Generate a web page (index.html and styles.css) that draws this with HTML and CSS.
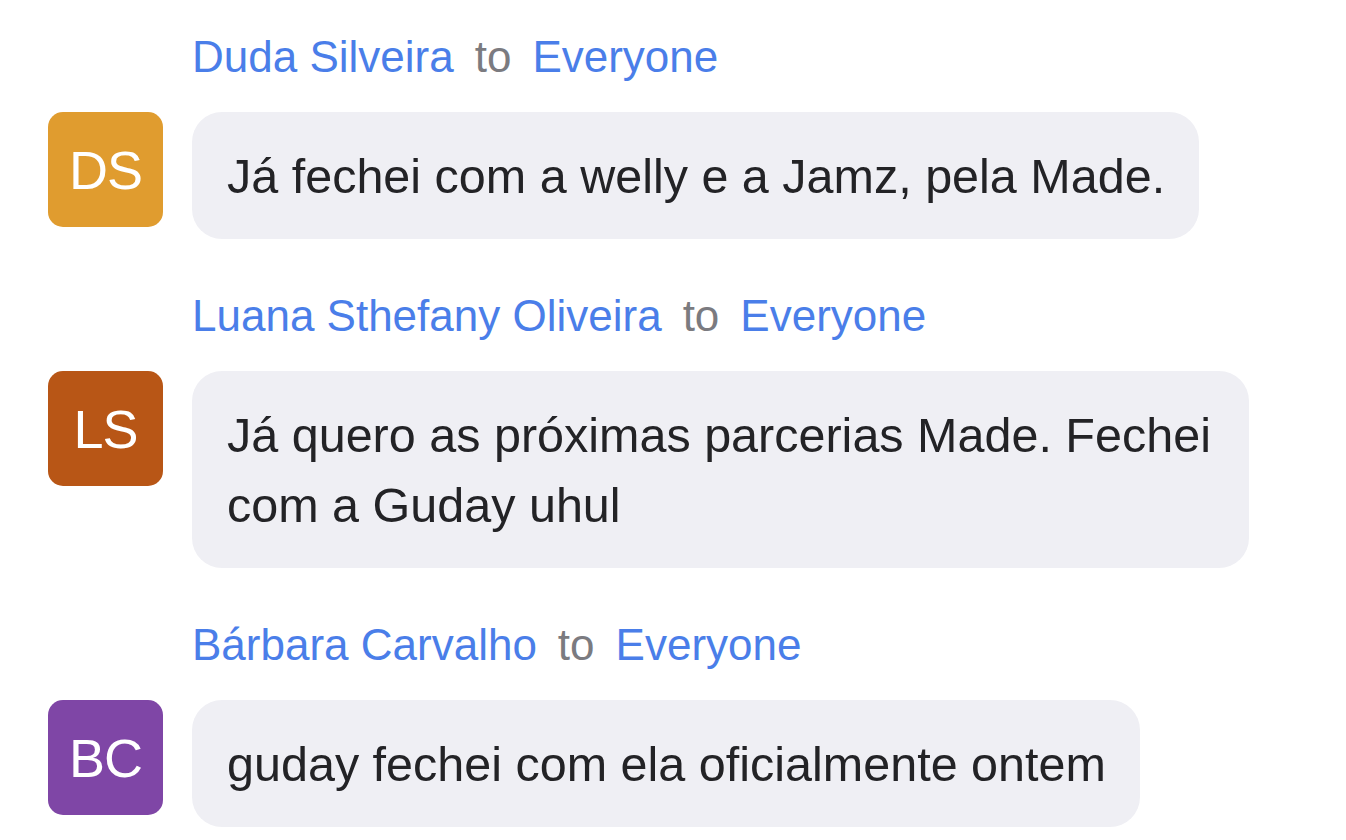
FILE: index.html
```html
<!DOCTYPE html>
<html lang="pt">
<head>
<meta charset="utf-8">
<title>Chat</title>
<link rel="stylesheet" href="styles.css">
</head>
<body>
<div class="chat">
  <div class="msg">
    <div class="meta"><span class="who">Duda Silveira</span><span class="to">to</span><span class="who">Everyone</span></div>
    <div class="avatar av-ds">DS</div>
    <div class="bubble">Já fechei com a welly e a Jamz, pela Made.</div>
  </div>
  <div class="msg">
    <div class="meta"><span class="who">Luana Sthefany Oliveira</span><span class="to">to</span><span class="who">Everyone</span></div>
    <div class="avatar av-ls">LS</div>
    <div class="bubble">Já quero as próximas parcerias Made. Fechei com a Guday uhul</div>
  </div>
  <div class="msg">
    <div class="meta"><span class="who">Bárbara Carvalho</span><span class="to">to</span><span class="who">Everyone</span></div>
    <div class="avatar av-bc">BC</div>
    <div class="bubble">guday fechei com ela oficialmente ontem</div>
  </div>
</div>
</body>
</html>
```

FILE: styles.css
```css
html, body {
  margin: 0;
  padding: 0;
  background: #ffffff;
}
body {
  font-family: "Liberation Sans", Arial, sans-serif;
  color: #232326;
}
.chat {
  display: flex;
  flex-direction: column;
  gap: 51px;
  padding: 31px 0 0 48px;
}
.msg {
  display: grid;
  grid-template-columns: 115px auto;
  column-gap: 29px;
  row-gap: 29px;
  justify-content: start;
  align-items: start;
}
.meta {
  grid-column: 2;
  grid-row: 1;
  display: flex;
  gap: 21px;
  font-size: 44px;
  line-height: 52px;
  white-space: nowrap;
}
.who {
  color: #4a7ee9;
}
.to {
  color: #7b7b80;
}
.avatar {
  grid-column: 1;
  grid-row: 2;
  width: 115px;
  height: 115px;
  border-radius: 15px;
  color: #ffffff;
  font-size: 54px;
  display: flex;
  align-items: center;
  justify-content: center;
  letter-spacing: -1px;
}
.av-ds { background: #e09c2f; }
.av-ls { background: #b85616; }
.av-bc { background: #7f46a6; }
.bubble {
  grid-column: 2;
  grid-row: 2;
  justify-self: start;
  box-sizing: border-box;
  max-width: 1057px;
  background: #efeff4;
  border-radius: 30px;
  padding: 29px 34px 28px 35px;
  font-size: 48.5px;
  line-height: 70px;
  color: #232326;
}
```
